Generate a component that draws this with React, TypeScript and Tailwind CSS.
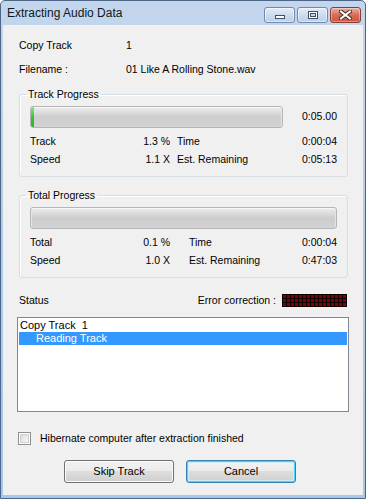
import React from "react";

const F = "font-['Liberation_Sans',Arial,sans-serif]";

function CaptionBtn({ kind }: { kind: "min" | "max" | "close" }) {
  if (kind === "close") {
    return (
      <div className="w-[31px] h-[16px] rounded-[3px] border border-[#8c3d31] bg-gradient-to-b from-[#eab0a3] via-[#d66d58] to-[#c9573f] shadow-[inset_0_0_0_1px_rgba(255,255,255,0.35)] flex items-center justify-center">
        <svg width="13" height="10" viewBox="0 0 13 10">
          <path d="M2 1.5 L11 8.5 M11 1.5 L2 8.5" stroke="#4a2a24" strokeWidth="4" strokeLinecap="square" />
          <path d="M2 1.5 L11 8.5 M11 1.5 L2 8.5" stroke="#ffffff" strokeWidth="2" strokeLinecap="square" />
        </svg>
      </div>
    );
  }
  return (
    <div className="w-[31px] h-[16px] rounded-[3px] border border-[#7089ac] bg-gradient-to-b from-[#e4edf8] via-[#cddcee] to-[#bccfe7] shadow-[inset_0_0_0_1px_rgba(255,255,255,0.5)] flex items-center justify-center">
      {kind === "min" ? (
        <svg width="12" height="10" viewBox="0 0 12 10">
          <rect x="1.5" y="5.5" width="9" height="3" fill="#fff" stroke="#3d4f68" />
        </svg>
      ) : (
        <svg width="12" height="10" viewBox="0 0 12 10">
          <rect x="1.5" y="1.5" width="9" height="7" fill="#fff" stroke="#3d4f68" />
          <rect x="3.5" y="3.5" width="5" height="3" fill="#c7d7ec" stroke="#3d4f68" />
        </svg>
      )}
    </div>
  );
}

function ProgressBar({ width, fill }: { width: string; fill: boolean }) {
  return (
    <div
      className={`${width} h-[22px] rounded-[3px] border border-[#b6b6b6] bg-gradient-to-b from-[#eeeeee] via-[#cdcdcd] to-[#d3d3d3] shadow-[inset_0_1px_0_#f7f7f7,inset_1px_0_0_#e4e4e4,inset_-1px_0_0_#e4e4e4] flex`}
    >
      {fill && (
        <div className="w-[3px] h-full rounded-l-[2px] bg-gradient-to-b from-[#8ae28c] via-[#2ec834] to-[#27b92c]" />
      )}
    </div>
  );
}

function StatRow({
  label,
  value,
  label2,
  value2,
  second,
}: {
  label: string;
  value: string;
  label2: string;
  value2: string;
  second: string;
}) {
  return (
    <div className="flex h-[14px] leading-[14px]">
      <div className="w-[140px] flex justify-between">
        <span>{label}</span>
        <span className="whitespace-pre">{value}</span>
      </div>
      <div className={`flex-1 flex justify-between ${second}`}>
        <span>{label2}</span>
        <span>{value2}</span>
      </div>
    </div>
  );
}

function Group({
  title,
  children,
  className,
}: {
  title: string;
  children: React.ReactNode;
  className?: string;
}) {
  return (
    <fieldset
      className={`w-[329px] border border-[#d5dfe5] rounded-[3px] shadow-[inset_1px_1px_0_#ffffff] pb-[10px] pt-[6px] ${className ?? ""}`}
    >
      <legend className="ml-[6px] px-[2px] h-[12px] leading-[12px]">{title}</legend>
      <div className="px-[10px]">{children}</div>
    </fieldset>
  );
}

function ErrorBox() {
  const cells: React.ReactNode[] = [];
  for (let r = 0; r < 3; r++) {
    for (let c = 0; c < 16; c++) {
      cells.push(
        <rect key={`${r}-${c}`} x={1 + c * 4} y={1 + r * 4} width="3" height="3" fill="#850000" />
      );
    }
  }
  return (
    <svg width="65" height="13" viewBox="0 0 65 13" className="block">
      <rect x="0" y="0" width="65" height="13" fill="#0a0000" />
      {cells}
    </svg>
  );
}

export default function App() {
  return (
    <div className={`${F} text-[10.5px] text-black w-[366px] h-[499px] flex flex-col border border-[#4d6685] bg-gradient-to-b from-[#c3d6ed] via-[#b2cae8] to-[#a9c5e8] rounded-t-[5px]`}>
      {/* title bar */}
      <div className="h-[24px] flex items-start justify-between pl-[6px] pr-[4px]">
        <div className="h-[24px] leading-[24px] text-[12px] text-[#101820]">Extracting Audio Data</div>
        <div className="flex gap-[2px] mt-[6px]">
          <CaptionBtn kind="min" />
          <CaptionBtn kind="max" />
          <CaptionBtn kind="close" />
        </div>
      </div>

      {/* client */}
      <div className="flex-1 mx-[2px] mb-[3px] bg-[#f0f0f0] pl-[16px] pt-[13px] flex flex-col">
        <div className="flex h-[14px] leading-[14px]">
          <span className="w-[107px]">Copy Track</span>
          <span>1</span>
        </div>
        <div className="flex h-[14px] leading-[14px] mt-[10px]">
          <span className="w-[107px]">Filename :</span>
          <span>01 Like A Rolling Stone.wav</span>
        </div>

        <Group title="Track Progress" className="mt-[12px]">
          <div className="flex items-center">
            <ProgressBar width="w-[253px]" fill={true} />
            <div className="flex-1 text-right">0:05.00</div>
          </div>
          <div className="mt-[6px]">
            <StatRow label="Track" value="1.3 %" label2="Time" value2="0:00:04" second="pl-[7px]" />
          </div>
          <div className="mt-[4px]">
            <StatRow label="Speed" value="1.1 X" label2="Est. Remaining" value2="0:05:13" second="pl-[7px]" />
          </div>
        </Group>

        <Group title="Total Progress" className="mt-[12px]">
          <ProgressBar width="w-full" fill={false} />
          <div className="mt-[6px]">
            <StatRow label="Total" value="0.1 %" label2="Time" value2="0:00:04" second="pl-[19px]" />
          </div>
          <div className="mt-[4px]">
            <StatRow label="Speed" value="1.0 X" label2="Est. Remaining" value2="0:47:03" second="pl-[19px]" />
          </div>
        </Group>

        <div className="w-[328px] mt-[15px] h-[14px] flex items-center justify-between">
          <span className="leading-[14px]">Status</span>
          <div className="flex items-center gap-[6px]">
            <span className="leading-[14px]">Error correction :</span>
            <ErrorBox />
          </div>
        </div>

        <div className="ml-[-2px] w-[332px] h-[95px] mt-[10px] border border-[#828790] bg-white p-[1px]">
          <div className="h-[13px] leading-[13px] pl-[1px] whitespace-pre text-[11px]">Copy Track  1</div>
          <div className="h-[13px] leading-[13px] pl-[17px] bg-[#3399ff] text-white text-[11px]">Reading Track</div>
        </div>

        <div className="flex items-center mt-[20px] h-[13px]">
          <div className="ml-[-1px] w-[13px] h-[13px] border border-[#8e8f8f] bg-white p-[1px]">
            <div className="w-full h-full border border-[#d0d0d0] bg-gradient-to-br from-[#dcdcdc] to-[#f8f8f8]" />
          </div>
          <span className="ml-[9px] leading-[13px]">Hibernate computer after extraction finished</span>
        </div>

        <div className="flex mt-[15px] ml-[45px] gap-[12px]">
          <button className="w-[110px] h-[23px] rounded-[3px] border border-[#707070] bg-[linear-gradient(to_bottom,#f2f2f2_0%,#ebebeb_50%,#dddddd_50%,#cfcfcf_100%)] shadow-[inset_0_0_0_1px_#fcfcfc] text-[11px] leading-[21px] text-black">
            Skip Track
          </button>
          <button className="w-[110px] h-[23px] rounded-[3px] border border-[#3c7fb1] bg-[linear-gradient(to_bottom,#f2f2f2_0%,#ebebeb_50%,#dddddd_50%,#cfcfcf_100%)] shadow-[inset_0_0_0_1px_#48d3f8,inset_0_0_0_2px_#c9eefb] text-[11px] leading-[21px] text-black">
            Cancel
          </button>
        </div>
      </div>
    </div>
  );
}
